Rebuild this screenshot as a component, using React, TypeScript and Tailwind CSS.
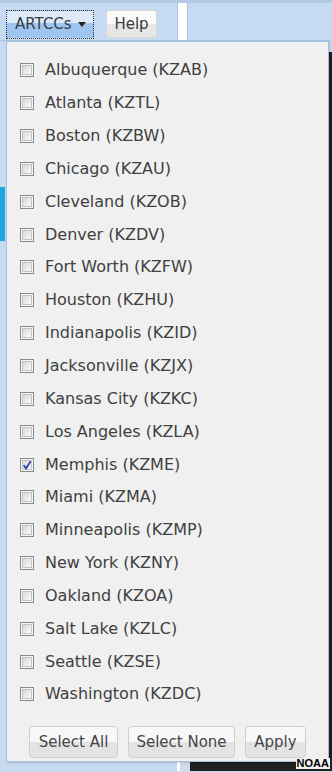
import { useState } from 'react';

const centers = [
  ['Albuquerque', 'KZAB'],
  ['Atlanta', 'KZTL'],
  ['Boston', 'KZBW'],
  ['Chicago', 'KZAU'],
  ['Cleveland', 'KZOB'],
  ['Denver', 'KZDV'],
  ['Fort Worth', 'KZFW'],
  ['Houston', 'KZHU'],
  ['Indianapolis', 'KZID'],
  ['Jacksonville', 'KZJX'],
  ['Kansas City', 'KZKC'],
  ['Los Angeles', 'KZLA'],
  ['Memphis', 'KZME'],
  ['Miami', 'KZMA'],
  ['Minneapolis', 'KZMP'],
  ['New York', 'KZNY'],
  ['Oakland', 'KZOA'],
  ['Salt Lake', 'KZLC'],
  ['Seattle', 'KZSE'],
  ['Washington', 'KZDC'],
];

const font = { fontFamily: '"DejaVu Sans", Tahoma, sans-serif' };

function Checkbox({ checked }: { checked: boolean }) {
  return (
    <span className="w-[14px] h-[14px] shrink-0 border border-[#8a8a8a] bg-[#f4f4f4] p-px">
      <span className="relative block w-full h-full border border-[#c4c4c4] bg-gradient-to-br from-[#d8d8d8] to-[#fbfbfb]">
        {checked && (
          <svg viewBox="0 0 10 10" className="absolute -left-[2px] -top-[2px] w-[12px] h-[12px]">
            <path d="M2.2 5.2 L4.2 7.8 L8 1.8" fill="none" stroke="#2a44b8" strokeWidth="1.5" />
          </svg>
        )}
      </span>
    </span>
  );
}

function GrayButton({ label, width }: { label: string; width: string }) {
  return (
    <button
      className={`${width} h-[32px] rounded-[4px] border border-[#cfcfcf] bg-gradient-to-b from-[#f8f8f8] from-50% to-[#e3e3e3] to-50% text-[15px] text-[#454545]`}
      style={font}
    >
      {label}
    </button>
  );
}

export default function App() {
  const [checked] = useState<string[]>(['KZME']);

  return (
    <div className="relative w-[332px] h-[772px] overflow-hidden bg-[#c6daf2]" style={font}>
      {/* toolbar */}
      <div className="flex h-[41px] border-t-[3px] border-[#b4cbe8] border-b border-b-[#a9c3e6]">
        <div className="flex items-start gap-[12px] w-[177px] pl-[6px] pt-[7px]">
          <button className="flex items-center gap-[6px] w-[88px] h-[29px] px-[8px] border border-dotted border-[#333] bg-gradient-to-b from-[#dfeaf8] from-45% to-[#9ec5ef] to-45% text-[15px] text-[#35404c]">
            ARTCCs
            <svg viewBox="0 0 8 5" className="w-[8px] h-[5px] shrink-0">
              <path d="M0 0 H8 L4 5 Z" fill="#222" />
            </svg>
          </button>
          <button className="w-[51px] h-[28px] rounded-[3px] border border-[#d6d6d6] bg-gradient-to-b from-[#fafafa] from-50% to-[#e6e6e6] to-50% text-[15px] text-[#3a3a3a]">
            Help
          </button>
        </div>
        <div className="w-[11px] bg-white border-x border-[#a9c3e6]" />
        <div className="flex-1" />
      </div>

      {/* map area behind */}
      <div className="flex h-[730px]">
        <div className="w-[177px] relative">
          <div className="absolute left-0 top-[146px] w-[5px] h-[54px] bg-[#1ea6df]" />
        </div>
        <div className="w-[3px] bg-white" />
        <div className="w-[10px] bg-[#cfdbe9]" />
        <div className="flex-1 flex flex-col">
          <div className="h-[11px]" />
          <div className="flex-1 bg-[#1f1f1f]" />
        </div>
      </div>

      {/* dropdown panel */}
      <div className="absolute left-[6px] top-[41px] w-[323px] h-[721px] border border-[#a6c0e0] bg-[#f0f0f0] shadow-[1px_1px_2px_rgba(0,0,0,0.15)]">
        <ul className="pt-[12px]">
          {centers.map(([name, code]) => (
            <li key={code} className="flex items-center gap-[11px] h-[32.85px] pl-[13px] text-[16px] text-[#404040]">
              <Checkbox checked={checked.includes(code)} />
              <span>
                {name} ({code})
              </span>
            </li>
          ))}
        </ul>
        <div className="flex gap-[10px] pl-[22px] pt-[15px]">
          <GrayButton label="Select All" width="w-[89px]" />
          <GrayButton label="Select None" width="w-[107px]" />
          <GrayButton label="Apply" width="w-[61px]" />
        </div>
      </div>

      {/* attribution */}
      <div className="absolute right-[2px] bottom-[3px] px-px bg-[#f0f0f0] text-[11px] leading-[11px] font-bold text-black" style={{ fontFamily: '"Liberation Sans", Arial, sans-serif' }}>
        NOAA
      </div>
    </div>
  );
}
